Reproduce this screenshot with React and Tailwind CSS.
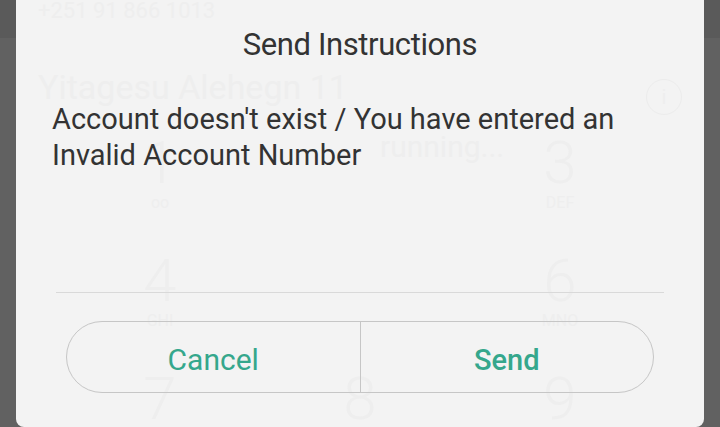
import React from 'react'

const keys = [
  [{ d: '1', s: 'oo' }, { d: '', s: '' }, { d: '3', s: 'DEF' }],
  [{ d: '4', s: 'GHI' }, { d: '', s: '' }, { d: '6', s: 'MNO' }],
  [{ d: '7', s: '' }, { d: '8', s: '' }, { d: '9', s: '' }],
]

// faint dialer screen that shows through the dialog
function GhostScreen() {
  return (
    <div aria-hidden="true" className="absolute inset-0 pointer-events-none text-[#eeeeee]">
      <div className="absolute left-[22px] top-[-6px] text-[22px]">+251 91 866 1013</div>
      <div className="absolute left-[22px] top-[62px] text-[34px]">Yitagesu Alehegn 11</div>
      <div className="absolute left-[364px] top-[124px] text-[30px]">running...</div>
      <div className="absolute left-[630px] top-[79px] w-[36px] h-[36px] rounded-full border border-[#ececec] flex items-center justify-center text-[20px]">i</div>
      <div className="absolute left-[44px] top-[132px] w-[600px] flex flex-col">
        {keys.map((row, i) => (
          <div key={i} className="grid grid-cols-3 h-[118px]">
            {row.map((k, j) => (
              <div key={j} className="flex flex-col items-center">
                <span className="text-[60px] font-light leading-[62px]">{k.d}</span>
                <span className="text-[16px] leading-[18px]">{k.s}</span>
              </div>
            ))}
          </div>
        ))}
      </div>
    </div>
  )
}

export default function App() {
  return (
    <div className="relative w-[720px] h-[427px] overflow-hidden flex flex-col bg-[#616161]" style={{ fontFamily: 'Roboto, "Noto Sans", sans-serif' }}>
      <div className="h-[38px] bg-[#5a5a5a]" />
      <div className="flex-1 bg-[#616161]" />

      <div className="absolute left-4 right-4 top-0 bottom-0 rounded-b-[8px] bg-[#f3f3f3] flex flex-col">
        <GhostScreen />
        <h2 className="relative mt-[27px] text-center text-[31px] leading-[36px] text-[#333] tracking-[-0.4px]">
          Send Instructions
        </h2>
        <p className="relative mt-[38px] pl-[36px] pr-[30px] text-[29px] leading-[36px] text-[#333]">
          Account doesn't exist / You have entered an Invalid Account Number
        </p>
        <div className="flex-1" />
        <div className="relative mx-[40px] h-px bg-[#d9d9d9]" />
        <div className="relative mt-[28px] mb-[34px] mx-[50px] h-[72px] rounded-full border border-[#c6c6c6] flex">
          <button className="flex-1 pt-[4px] text-[30px] text-[#35a78c]">Cancel</button>
          <div className="w-px bg-[#c6c6c6]" />
          <button className="flex-1 pt-[8px] text-[29px] font-medium text-[#35a78c]">Send</button>
        </div>
      </div>
    </div>
  )
}
